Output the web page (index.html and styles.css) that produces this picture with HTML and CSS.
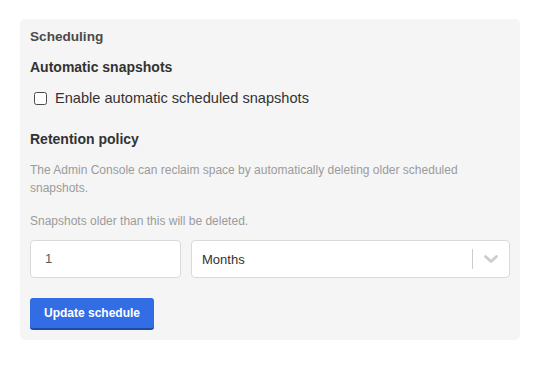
FILE: index.html
```html
<!DOCTYPE html>
<html>
<head>
<meta charset="utf-8">
<link rel="stylesheet" href="styles.css">
</head>
<body>
<div class="page">
  <div class="card">
    <h3 class="title">Scheduling</h3>
    <h4 class="subtitle">Automatic snapshots</h4>
    <label class="check-row">
      <span class="checkbox"></span>
      <span class="check-label">Enable automatic scheduled snapshots</span>
    </label>
    <h4 class="subtitle retention">Retention policy</h4>
    <p class="desc">The Admin Console can reclaim space by automatically deleting older scheduled snapshots.</p>
    <p class="desc hint">Snapshots older than this will be deleted.</p>
    <div class="fields">
      <div class="input">1</div>
      <div class="select">
        <span class="select-value">Months</span>
        <span class="select-sep"></span>
        <span class="select-arrow">
          <svg width="20" height="20" viewBox="0 0 20 20"><path d="M4.5 7.5 L10 12.5 L15.5 7.5" fill="none" stroke="#cccccc" stroke-width="2.8" stroke-linecap="round" stroke-linejoin="round"/></svg>
        </span>
      </div>
    </div>
    <button class="btn">Update schedule</button>
  </div>
</div>
</body>
</html>
```
FILE: styles.css
```css
html, body {
  margin: 0;
  padding: 0;
  background: #ffffff;
  font-family: "Liberation Sans", Arial, Helvetica, sans-serif;
}
.page {
  padding: 19px 18px 0 20px;
}
.card {
  background: #f5f5f5;
  border-radius: 5px;
  padding: 9px 10px 10px 10px;
  width: 480px;
}
.title {
  margin: 0;
  font-size: 13.6px;
  line-height: 17px;
  font-weight: bold;
  color: #4a4a4a;
}
.subtitle {
  margin: 13px 0 0 0;
  font-size: 14px;
  line-height: 18px;
  font-weight: bold;
  color: #323232;
}
.retention {
  margin-top: 23px;
}
.check-row {
  display: flex;
  align-items: center;
  margin-top: 13px;
  height: 18px;
}
.checkbox {
  width: 11px;
  height: 11px;
  border: 1px solid #4a4a4a;
  border-radius: 2.5px;
  background: #fff;
  margin-left: 4px;
  margin-right: 8px;
}
.check-label {
  font-size: 14.6px;
  color: #323232;
}
.desc {
  margin: 13px 0 0 0;
  font-size: 12px;
  line-height: 18px;
  color: #9b9b9b;
  width: 470px;
}
.hint {
  margin-top: 15px;
}
.fields {
  display: flex;
  gap: 10px;
  margin-top: 10px;
}
.input {
  box-sizing: border-box;
  width: 151px;
  height: 38px;
  background: #fff;
  border: 1px solid #dadada;
  border-radius: 4px;
  padding: 0 14px;
  font-size: 13px;
  line-height: 36px;
  color: #585858;
}
.select {
  box-sizing: border-box;
  flex: 1;
  height: 38px;
  background: #fff;
  border: 1px solid #dadada;
  border-radius: 4px;
  display: flex;
  align-items: center;
  padding-left: 10px;
}
.select-value {
  flex: 1;
  font-size: 13px;
  color: #323232;
}
.select-sep {
  width: 1px;
  height: 20px;
  background: #cccccc;
}
.select-arrow {
  width: 36px;
  display: flex;
  justify-content: center;
  align-items: center;
}
.btn {
  display: block;
  margin-top: 20px;
  width: 124px;
  height: 32px;
  background: #326de6;
  border: none;
  border-bottom: 2px solid #1f4ba8;
  border-radius: 3px;
  color: #fff;
  font-family: "Liberation Sans", Arial, sans-serif;
  font-size: 12px;
  font-weight: bold;
  padding: 0;
}
```
